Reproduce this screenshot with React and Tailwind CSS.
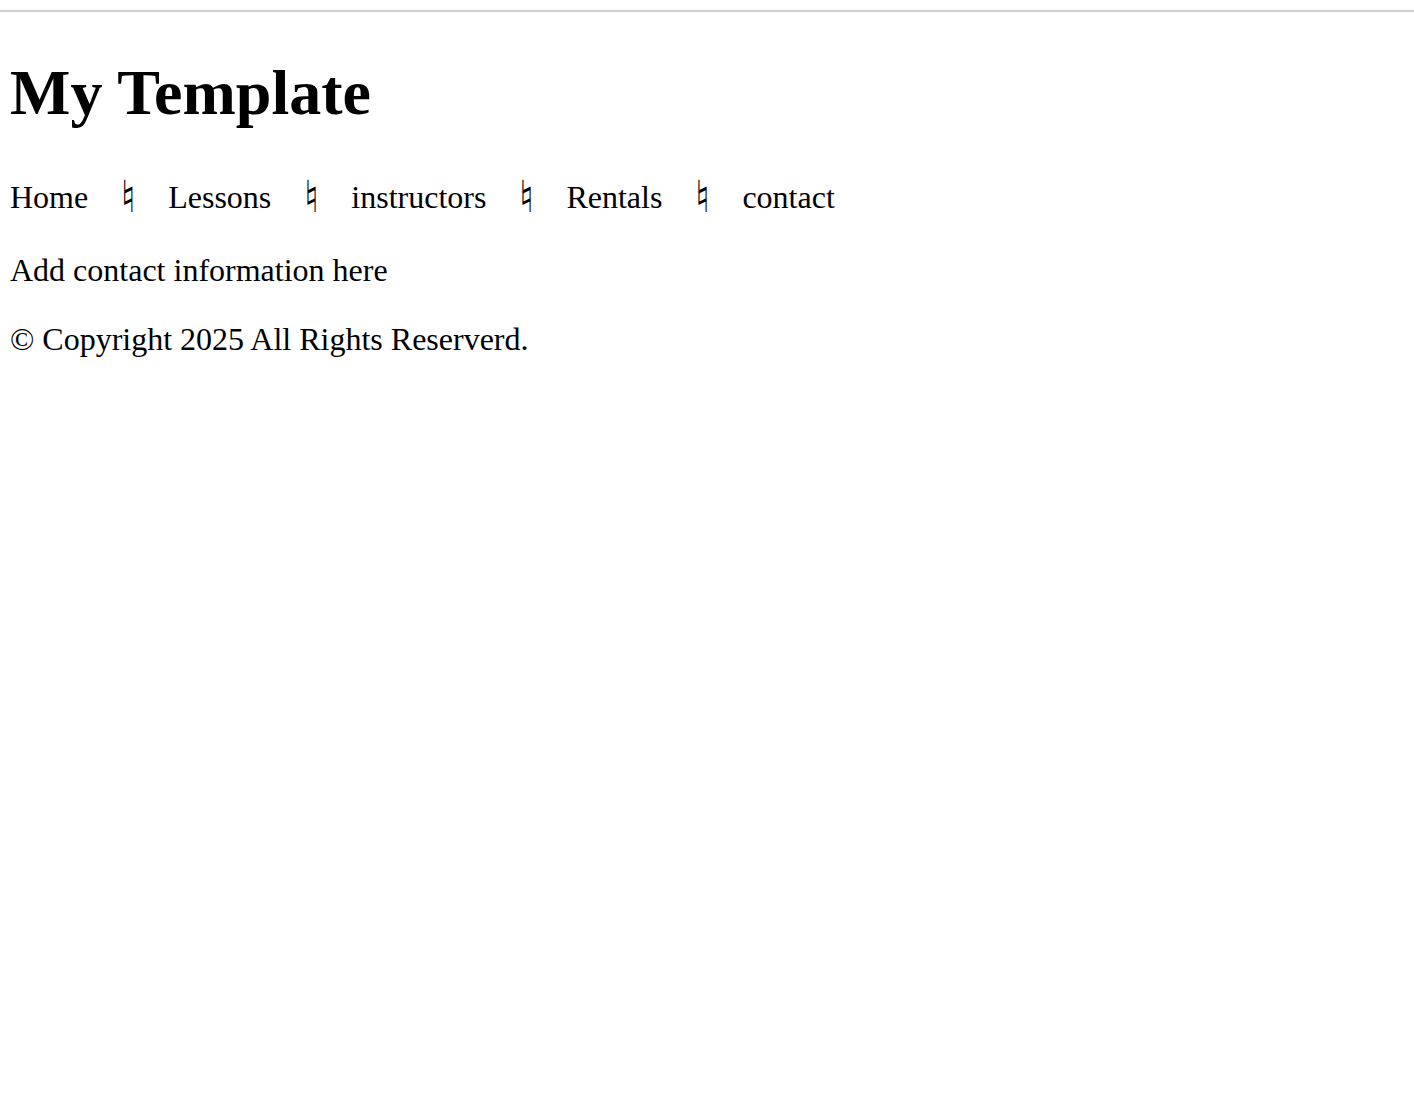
import React from 'react';

const links = ['Home', 'Lessons', 'instructors', 'Rentals', 'contact'];

export default function App() {
    return (
        <div className="min-h-screen bg-white text-black font-['Liberation_Serif','Times_New_Roman',serif]">
            <div className="pt-[10px]">
                <div className="h-[2px] bg-[#cfcfcf]" />
            </div>
            <div className="px-[10px]">
                <h1 className="mt-[44px] text-[64px] leading-[74px] font-bold">My Template</h1>

                {/* nav */}
                <nav className="mt-[49px] flex items-center gap-[34px] text-[32px] leading-[37px]">
                    {links.map((l, i) => (
                        <React.Fragment key={l}>
                            {i > 0 && (
                                <span className="w-[12px] h-[37px] flex items-center justify-center font-['DejaVu_Sans',sans-serif] text-[44px] leading-none -mt-[2px]">
                                    ♮
                                </span>
                            )}
                            <a href="#">{l}</a>
                        </React.Fragment>
                    ))}
                </nav>

                <p className="mt-[36px] text-[32px] leading-[37px]">Add contact information here</p>
                <p className="mt-[32px] text-[32px] leading-[37px]">© Copyright 2025 All Rights Reserverd.</p>
            </div>
        </div>
    );
}
